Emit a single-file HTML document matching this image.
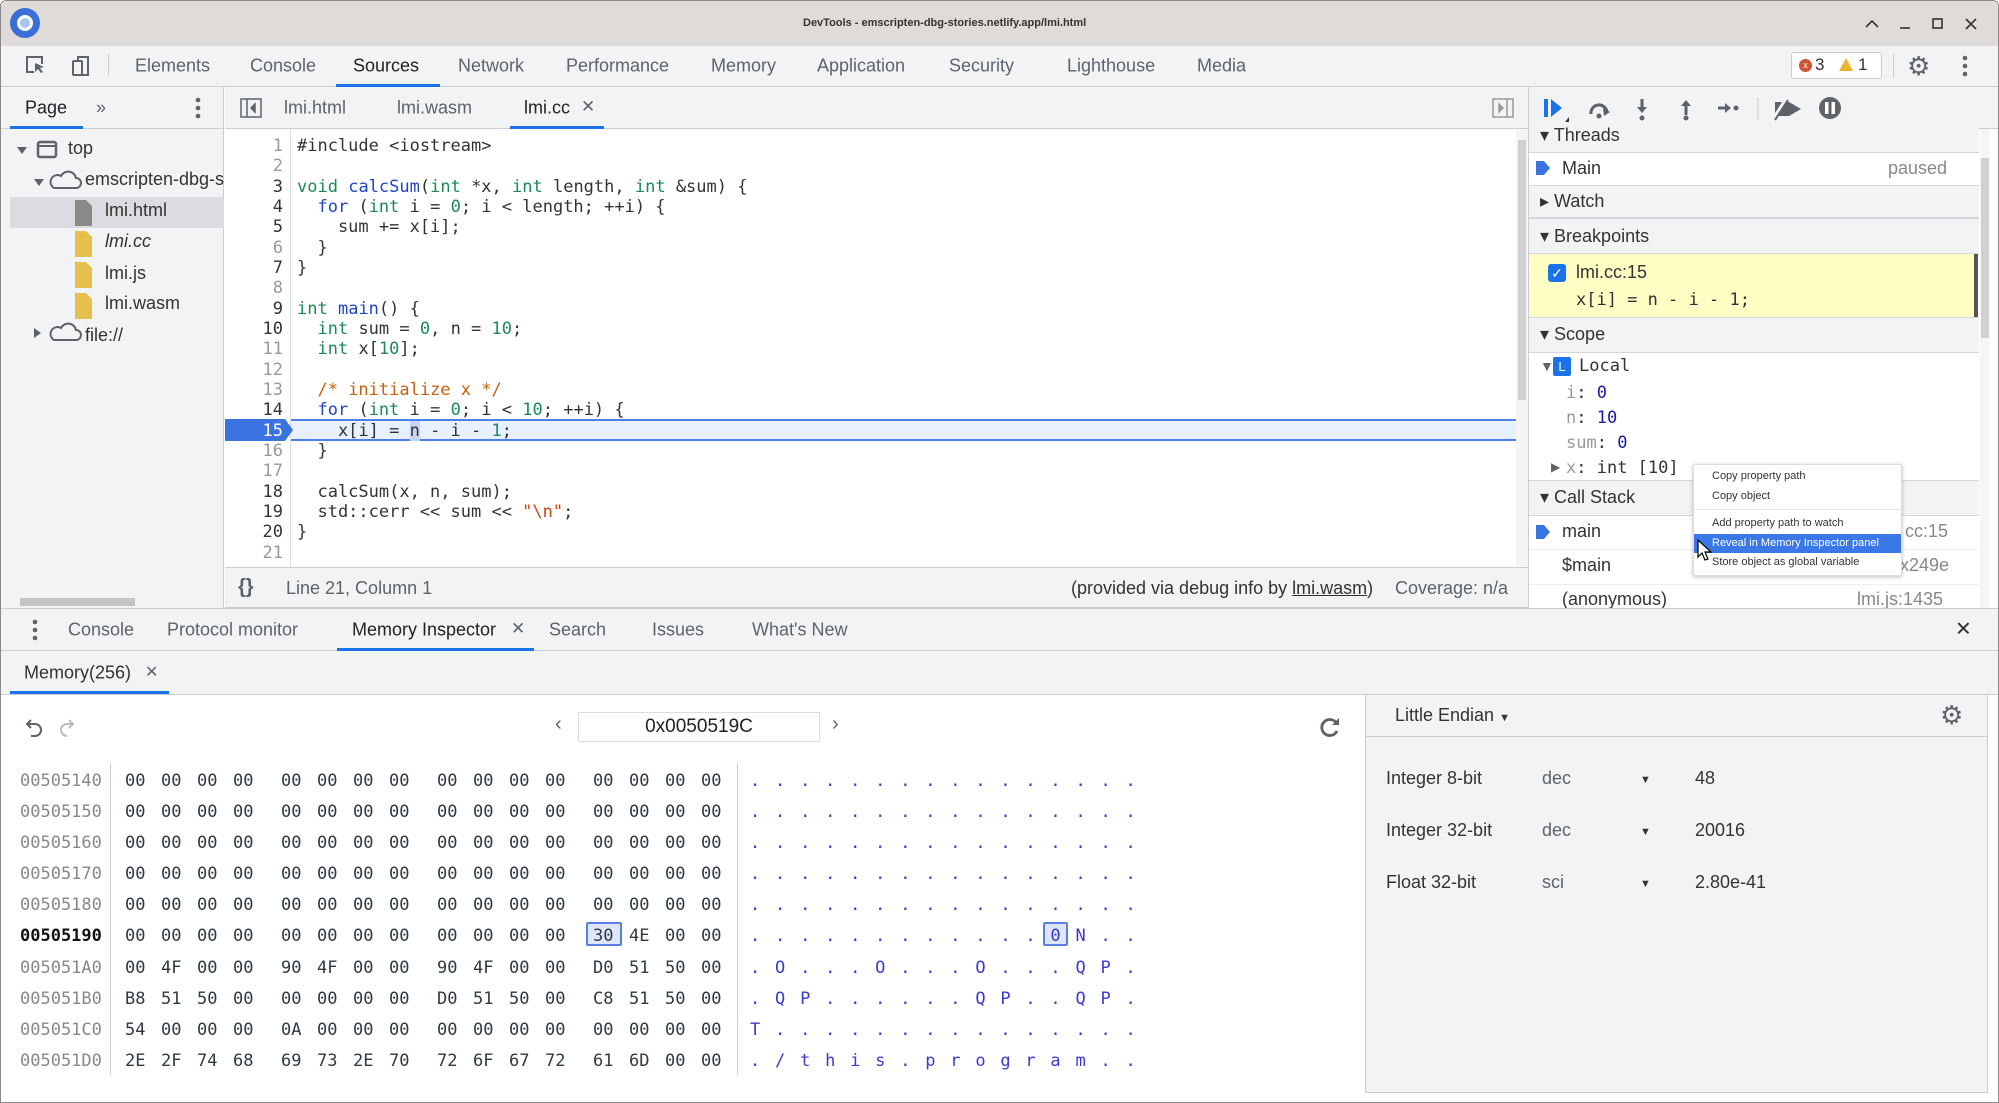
<!DOCTYPE html>
<html><head><meta charset="utf-8"><style>
*{margin:0;padding:0;box-sizing:border-box}
body{width:1999px;height:1103px;overflow:hidden;background:#fff;font-family:"Liberation Sans",sans-serif;color:#333}
.a{position:absolute;white-space:pre}
.m{font-family:"DejaVu Sans Mono","Liberation Mono",monospace}
.t{font-size:18px;color:#5f6368;transform:translateY(-50%)}
.kw{color:#1b8a5a}.bl{color:#1f45c9}.cm{color:#c8600e}.st{color:#c8460e}.nu{color:#1b8a5a}
.hx{font-size:17px;color:#303942;word-spacing:5.3px}
.ad{font-size:17px;color:#888}
.as{font-size:17px;color:#3a3ad0;letter-spacing:14.8px}
.hdr{position:absolute;left:1529px;width:450px;background:#f1f3f4;border-bottom:1px solid #d3d6da;border-top:1px solid #d3d6da}
.cmi{font-size:11px;color:#333;position:absolute;left:1712px}
</style></head><body>
<div class="a" style="left:0;top:0;width:1999px;height:1103px;border:1px solid #8a8a8a;border-radius:6px 6px 0 0"></div>
<div class="a" style="left:1px;top:1px;width:1997px;height:45px;background:#dedbd8;border-radius:6px 6px 0 0"></div>
<div class="a" style="left:10px;top:8px;width:30px;height:30px;border-radius:50%;background:#3b6fd8"></div>
<div class="a" style="left:17px;top:15px;width:16px;height:16px;border-radius:50%;background:#a8c4f2;border:3px solid #fff"></div>
<div class="a" style="left:803px;top:17px;font-size:11px;font-weight:bold;color:#333">DevTools - emscripten-dbg-stories.netlify.app/lmi.html</div>
<svg class="a" style="left:1862px;top:14px" width="130" height="20" stroke="#333" stroke-width="1.6" fill="none"><path d="M4 13l6-6 6 6"/><path d="M38 14h10"/><rect x="71" y="5" width="9" height="9"/><path d="M104 5l10 10M114 5l-10 10"/></svg>
<div class="a" style="left:1px;top:46px;width:1997px;height:41px;background:#f1f3f4;border-bottom:1px solid #cacdd1"></div>
<svg class="a" style="left:24px;top:54px" width="70" height="24" fill="none" stroke="#5f6368" stroke-width="2"><path d="M10 18H3V3h15v7"/><path d="M11 9l9 4-4 1 3 4-2 1-3-4-3 3z" fill="#5f6368" stroke="none"/><rect x="49" y="7" width="9" height="14" rx="1"/><path d="M54 7V3h10v18h-6"/></svg>
<div class="a" style="left:108px;top:54px;width:1px;height:22px;background:#ccc"></div>
<div class="a t" style="left:135px;top:66px">Elements</div>
<div class="a t" style="left:250px;top:66px">Console</div>
<div class="a t" style="left:353px;top:66px;color:#202124">Sources</div>
<div class="a" style="left:336px;top:84px;width:104px;height:3px;background:#1a73e8"></div>
<div class="a t" style="left:458px;top:66px">Network</div>
<div class="a t" style="left:566px;top:66px">Performance</div>
<div class="a t" style="left:711px;top:66px">Memory</div>
<div class="a t" style="left:817px;top:66px">Application</div>
<div class="a t" style="left:949px;top:66px">Security</div>
<div class="a t" style="left:1067px;top:66px">Lighthouse</div>
<div class="a t" style="left:1197px;top:66px">Media</div>
<div class="a" style="left:1791px;top:52px;width:91px;height:27px;border:1px solid #ccc;border-radius:3px;background:#fff"></div>
<div class="a" style="left:1799px;top:59px;width:13px;height:13px;border-radius:50%;background:#d3542c;color:#fff;font-size:9px;text-align:center;line-height:13px">x</div>
<div class="a" style="left:1815px;top:55px;font-size:17px">3</div>
<svg class="a" style="left:1838px;top:57px" width="16" height="15"><path d="M8 1L15 14H1z" fill="#e8b630"/></svg>
<div class="a" style="left:1858px;top:55px;font-size:17px">1</div>
<div class="a" style="left:1893px;top:54px;width:1px;height:24px;background:#ccc"></div>
<div class="a" style="left:1907px;top:51px;font-size:26px;color:#5f6368">⚙</div>
<svg class="a" style="left:1962px;top:55px" width="6" height="22" fill="#5f6368"><circle cx="3" cy="3" r="2.3"/><circle cx="3" cy="11" r="2.3"/><circle cx="3" cy="19" r="2.3"/></svg>
<div class="a" style="left:1px;top:87px;width:223px;height:521px;background:#f1f3f4;border-right:1px solid #cacdd1"></div>
<div class="a" style="left:1px;top:87px;width:223px;height:42px;border-bottom:1px solid #cacdd1"></div>
<div class="a t" style="left:25px;top:108px;color:#202124">Page</div>
<div class="a t" style="left:96px;top:108px">»</div>
<svg class="a" style="left:195px;top:97px" width="6" height="22" fill="#5f6368"><circle cx="3" cy="3" r="2.3"/><circle cx="3" cy="11" r="2.3"/><circle cx="3" cy="19" r="2.3"/></svg>
<div class="a" style="left:10px;top:126px;width:73px;height:3px;background:#1a73e8"></div>
<div class="a" style="left:10px;top:197px;width:214px;height:31px;background:#dadcdf"></div>
<svg class="a" style="left:14px;top:139px" width="100" height="210" fill="none" stroke="#5f6368" stroke-width="2">
<path d="M3 8h10l-5 7z" fill="#5f6368" stroke="none"/><rect x="24" y="3" width="18" height="15" rx="2" stroke-width="2.5"/><path d="M24 7h18"/>
<path d="M20 40h10l-5 7z" fill="#5f6368" stroke="none"/><path d="M40 49h22a5 5 0 0 0 0-10a8 8 0 0 0-15-2a6 6 0 0 0-7 12z"/>
<path d="M20 189l7 5-7 5z" fill="#5f6368" stroke="none"/><path d="M40 201h22a5 5 0 0 0 0-10a8 8 0 0 0-15-2a6 6 0 0 0-7 12z"/>
</svg>
<svg class="a" style="left:74px;top:199px" width="20" height="130"><path d="M1 1h11l6 6v20H1z" fill="#8a8a8a"/><path d="M1 32h11l6 6v20H1z" fill="#e6c04c"/><path d="M1 63h11l6 6v20H1z" fill="#e6c04c"/><path d="M1 94h11l6 6v20H1z" fill="#e6c04c"/></svg>
<div class="a" style="left:68px;top:138px;font-size:18px">top</div>
<div class="a" style="left:85px;top:169px;font-size:18px;width:139px;overflow:hidden">emscripten-dbg-stories</div>
<div class="a" style="left:105px;top:200px;font-size:18px">lmi.html</div>
<div class="a" style="left:105px;top:231px;font-size:18px;font-style:italic">lmi.cc</div>
<div class="a" style="left:105px;top:263px;font-size:18px">lmi.js</div>
<div class="a" style="left:105px;top:293px;font-size:18px">lmi.wasm</div>
<div class="a" style="left:85px;top:325px;font-size:18px">file://</div>
<div class="a" style="left:20px;top:598px;width:115px;height:8px;background:#c4c4c4"></div>
<div class="a" style="left:225px;top:87px;width:1303px;height:42px;background:#f1f3f4;border-bottom:1px solid #cacdd1"></div>
<svg class="a" style="left:240px;top:98px" width="22" height="20" fill="none" stroke="#5f6368" stroke-width="1.5"><rect x="1" y="1" width="20" height="18"/><path d="M7 1v18"/><path d="M15 6l-4 4 4 4z" fill="#5f6368"/></svg>
<div class="a t" style="left:284px;top:108px">lmi.html</div>
<div class="a t" style="left:397px;top:108px">lmi.wasm</div>
<div class="a t" style="left:524px;top:108px;color:#202124">lmi.cc</div>
<div class="a t" style="left:581px;top:107px;font-size:17px">✕</div>
<div class="a" style="left:510px;top:126px;width:94px;height:3px;background:#1a73e8"></div>
<svg class="a" style="left:1492px;top:98px" width="22" height="20" fill="none" stroke="#999" stroke-width="1.5"><rect x="1" y="1" width="20" height="18"/><path d="M15 1v18"/><path d="M7 6l4 4-4 4z" fill="#999"/></svg>
<div class="a" style="left:290px;top:129px;width:1px;height:438px;background:#ddd"></div>
<div class="a" style="left:1516px;top:129px;width:12px;height:438px;background:#f5f5f5"></div>
<div class="a" style="left:1518px;top:140px;width:8px;height:260px;background:#d0d0d0"></div>
<div class="a" style="left:291px;top:419px;width:1225px;height:22px;background:#e8effd;border-top:2px solid #4a80e8;border-bottom:2px solid #4a80e8"></div>
<svg class="a" style="left:225px;top:419px" width="70" height="22"><path d="M0 0h60l8 11-8 11H0z" fill="#3b73e0"/></svg>
<div class="a m" style="left:223px;top:136px;font-size:17px;line-height:20.33px;width:60px;text-align:right;color:#999">1
2
<span style="color:#333">3
4
5</span>
6
<span style="color:#333">7</span>
8
<span style="color:#333">9
10</span>
11
12
13
<span style="color:#333">14</span>
<span style="color:#fff">15</span>
16
17
<span style="color:#333">18
19
20</span>
21</div>
<div class="a m" style="left:297px;top:136px;font-size:17px;line-height:20.33px;color:#333">#include &lt;iostream&gt;

<span class="kw">void</span> <span class="bl">calcSum</span>(<span class="kw">int</span> *x, <span class="kw">int</span> length, <span class="kw">int</span> &amp;sum) {
  <span class="bl">for</span> (<span class="kw">int</span> i = <span class="nu">0</span>; i &lt; length; ++i) {
    sum += x[i];
  }
}

<span class="kw">int</span> <span class="bl">main</span>() {
  <span class="kw">int</span> sum = <span class="nu">0</span>, n = <span class="nu">10</span>;
  <span class="kw">int</span> x[<span class="nu">10</span>];

  <span class="cm">/* initialize x */</span>
  <span class="bl">for</span> (<span class="kw">int</span> i = <span class="nu">0</span>; i &lt; <span class="nu">10</span>; ++i) {
    x[i] = <span style="background:#c5d5f5">n</span> - i - <span class="nu">1</span>;
  }

  calcSum(x, n, sum);
  std::cerr &lt;&lt; sum &lt;&lt; <span class="st">"\n"</span>;
}
</div>
<div class="a" style="left:225px;top:567px;width:1303px;height:41px;background:#f1f3f4;border-top:1px solid #cacdd1;border-bottom:1px solid #cacdd1"></div>
<div class="a" style="left:238px;top:576px;font-size:20px;color:#5f6368;font-weight:bold">{}</div>
<div class="a" style="left:286px;top:578px;font-size:18px;color:#5f6368">Line 21, Column 1</div>
<div class="a" style="left:1071px;top:578px;font-size:18px;color:#333">(provided via debug info by <u>lmi.wasm</u>)</div>
<div class="a" style="left:1395px;top:578px;font-size:18px;color:#5f6368">Coverage: n/a</div>
<div class="a" style="left:1528px;top:87px;width:1px;height:521px;background:#cacdd1"></div>
<div class="a" style="left:1529px;top:87px;width:469px;height:521px;background:#fff"></div>
<div class="a" style="left:1529px;top:87px;width:469px;height:42px;background:#f1f3f4;border-bottom:1px solid #cacdd1"></div>
<svg class="a" style="left:1540px;top:96px" width="310" height="28">
<rect x="4" y="3" width="4" height="18" fill="#1a73e8"/><path d="M11 3l11 9-11 9z" fill="#1a73e8"/><path d="M25 26l4-5v5z" fill="#333"/>
<path d="M51 18a8 8 0 0 1 16-2" fill="none" stroke="#5f6368" stroke-width="3"/><path d="M63 12l7 4-6 4z" fill="#5f6368"/><circle cx="59" cy="20" r="2.5" fill="#5f6368"/>
<path d="M102 3v10" stroke="#5f6368" stroke-width="3"/><path d="M97 11l5 6 5-6z" fill="#5f6368"/><circle cx="102" cy="22" r="2.5" fill="#5f6368"/>
<path d="M146 9v10" stroke="#5f6368" stroke-width="3"/><path d="M141 10l5-6 5 6z" fill="#5f6368"/><circle cx="146" cy="22" r="2.5" fill="#5f6368"/>
<path d="M178 12h8" stroke="#5f6368" stroke-width="3"/><path d="M185 7l6 5-6 5z" fill="#5f6368"/><circle cx="196" cy="12" r="2.5" fill="#5f6368"/>
<path d="M218 2v22" stroke="#ccc" stroke-width="1"/>
<path d="M235 6h14l12 7-12 7h-14z" fill="#5f6368"/><path d="M233 24l14-22" stroke="#f1f3f4" stroke-width="4"/><path d="M235 24l13-20" stroke="#5f6368" stroke-width="2"/>
<circle cx="290" cy="12" r="11" fill="#5f6368"/><rect x="285" y="6" width="3.5" height="12" fill="#fff"/><rect x="291.5" y="6" width="3.5" height="12" fill="#fff"/>
</svg>
<div class="hdr" style="top:122px;height:31px;border-top:none"></div>
<div class="a" style="left:1540px;top:125px;font-size:18px;color:#333;height:20px;overflow:hidden">▾ Threads</div>
<svg class="a" style="left:1535px;top:159px" width="16" height="18"><path d="M1 2h8l6 7-6 7H1z" fill="#3b73e0"/></svg>
<div class="a" style="left:1562px;top:158px;font-size:18px">Main</div>
<div class="a" style="left:1888px;top:158px;font-size:18px;color:#888">paused</div>
<div class="hdr" style="top:185px;height:33px"></div>
<div class="a" style="left:1540px;top:191px;font-size:18px">▸ Watch</div>
<div class="hdr" style="top:218px;height:36px"></div>
<div class="a" style="left:1540px;top:226px;font-size:18px">▾ Breakpoints</div>
<div class="a" style="left:1529px;top:254px;width:449px;height:63px;background:#fefdc4;border-right:4px solid #555"></div>
<div class="a" style="left:1548px;top:264px;width:18px;height:18px;border-radius:3px;background:#1a73e8;color:#fff;font-size:14px;text-align:center;line-height:18px">✓</div>
<div class="a" style="left:1576px;top:262px;font-size:18px">lmi.cc:15</div>
<div class="a m" style="left:1576px;top:290px;font-size:17px">x[i] = n - i - 1;</div>
<div class="hdr" style="top:317px;height:36px"></div>
<div class="a" style="left:1540px;top:324px;font-size:18px">▾ Scope</div>
<div class="a" style="left:1540px;top:358px;font-size:14px;color:#5f6368">▼</div>
<div class="a" style="left:1553px;top:357px;width:18px;height:19px;background:#1a73e8;color:#fff;font-size:13px;text-align:center;line-height:19px;border-radius:2px">L</div>
<div class="a m" style="left:1579px;top:356px;font-size:17px">Local</div>
<div class="a m" style="left:1566px;top:381px;font-size:17px;line-height:25px"><span style="color:#999">i</span>: <span style="color:#1a1aa6">0</span>
<span style="color:#999">n</span>: <span style="color:#1a1aa6">10</span>
<span style="color:#999">sum</span>: <span style="color:#1a1aa6">0</span>
<span style="color:#999">x</span>: int [10]</div>
<div class="a" style="left:1551px;top:460px;font-size:12px;color:#5f6368">▶</div>
<div class="hdr" style="top:480px;height:36px"></div>
<div class="a" style="left:1540px;top:487px;font-size:18px">▾ Call Stack</div>
<svg class="a" style="left:1535px;top:523px" width="16" height="18"><path d="M1 2h8l6 7-6 7H1z" fill="#3b73e0"/></svg>
<div class="a" style="left:1562px;top:521px;font-size:18px">main</div>
<div class="a" style="left:1905px;top:521px;font-size:18px;color:#888">cc:15</div>
<div class="a" style="left:1529px;top:549px;width:450px;height:1px;background:#eee"></div>
<div class="a" style="left:1562px;top:555px;font-size:18px">$main</div>
<div class="a" style="left:1900px;top:555px;font-size:18px;color:#888">x249e</div>
<div class="a" style="left:1529px;top:584px;width:450px;height:1px;background:#eee"></div>
<div class="a" style="left:1562px;top:589px;font-size:18px">(anonymous)</div>
<div class="a" style="left:1857px;top:589px;font-size:18px;color:#888">lmi.js:1435</div>
<div class="a" style="left:1980px;top:129px;width:10px;height:479px;background:#f5f5f5"></div>
<div class="a" style="left:1981px;top:158px;width:8px;height:180px;background:#d0d0d0"></div>
<div class="a" style="left:1693px;top:464px;width:209px;height:112px;background:#fff;border:1px solid #ddd;box-shadow:0 1px 4px rgba(0,0,0,.25)"></div>
<div class="cmi" style="top:470px">Copy property path</div>
<div class="cmi" style="top:490px">Copy object</div>
<div class="a" style="left:1694px;top:509px;width:207px;height:1px;background:#e4e4e4"></div>
<div class="cmi" style="top:517px">Add property path to watch</div>
<div class="a" style="left:1694px;top:534px;width:207px;height:19px;background:#3b78e7"></div>
<div class="cmi" style="top:537px;color:#fff">Reveal in Memory Inspector panel</div>
<div class="cmi" style="top:556px">Store object as global variable</div>
<svg class="a" style="left:1697px;top:539px" width="16" height="22"><path d="M1 1v17l4-4 3 7 3-1-3-7h6z" fill="#fff" stroke="#000" stroke-width="1.2"/></svg>
<div class="a" style="left:1px;top:608px;width:1997px;height:43px;background:#f1f3f4;border-top:1px solid #cacdd1;border-bottom:1px solid #cacdd1"></div>
<svg class="a" style="left:32px;top:619px" width="6" height="22" fill="#5f6368"><circle cx="3" cy="3" r="2.3"/><circle cx="3" cy="11" r="2.3"/><circle cx="3" cy="19" r="2.3"/></svg>
<div class="a t" style="left:68px;top:630px">Console</div>
<div class="a t" style="left:167px;top:630px">Protocol monitor</div>
<div class="a t" style="left:352px;top:630px;color:#202124">Memory Inspector</div>
<div class="a t" style="left:511px;top:629px;font-size:17px">✕</div>
<div class="a" style="left:337px;top:648px;width:197px;height:3px;background:#1a73e8"></div>
<div class="a t" style="left:549px;top:630px">Search</div>
<div class="a t" style="left:652px;top:630px">Issues</div>
<div class="a t" style="left:752px;top:630px">What's New</div>
<div class="a t" style="left:1955px;top:629px;font-size:20px;color:#333">✕</div>
<div class="a" style="left:1px;top:651px;width:1997px;height:44px;background:#f1f3f4;border-bottom:1px solid #cacdd1"></div>
<div class="a t" style="left:24px;top:673px;color:#333">Memory(256)</div>
<div class="a t" style="left:145px;top:672px;font-size:16px">✕</div>
<div class="a" style="left:10px;top:691px;width:159px;height:3px;background:#1a73e8"></div>
<div class="a" style="left:1px;top:695px;width:1364px;height:400px;background:#fff"></div>
<svg class="a" style="left:25px;top:715px" width="50" height="24" fill="none" stroke-width="2"><path d="M6 5L2 9l4 4" stroke="#5f6368"/><path d="M2 9h8a6 6 0 0 1 0 12H6" stroke="#5f6368"/><path d="M44 5l4 4-4 4" stroke="#bbb"/><path d="M48 9h-6a6 6 0 0 0 0 12" stroke="#bbb"/></svg>
<div class="a" style="left:555px;top:713px;font-size:20px;color:#5f6368">‹</div>
<div class="a" style="left:578px;top:712px;width:242px;height:30px;border:1px solid #ddd;text-align:center;font-size:19px;line-height:28px;color:#202124">0x0050519C</div>
<div class="a" style="left:832px;top:713px;font-size:20px;color:#5f6368">›</div>
<svg class="a" style="left:1318px;top:715px" width="24" height="24" fill="none" stroke="#5f6368" stroke-width="2.8"><path d="M19 9a8 8 0 1 0 0 7"/><path d="M21 3v7h-7z" fill="#5f6368" stroke="none"/></svg>
<div class="a" style="left:110px;top:763px;width:1px;height:312px;background:#ccc"></div>
<div class="a" style="left:737px;top:763px;width:1px;height:312px;background:#ccc"></div>
<div class="a m ad" style="left:20px;top:766px;line-height:31.1px">00505140
00505150
00505160
00505170
00505180
<b style="color:#111">00505190</b>
005051A0
005051B0
005051C0
005051D0</div>
<div class="a" style="left:586px;top:922px;width:36px;height:24px;border:2px solid #5a7fe0;background:#dfe6fb;border-radius:2px"></div>
<div class="a" style="left:1043px;top:922px;width:25px;height:24px;border:2px solid #5a7fe0;background:#dfe6fb;border-radius:2px"></div>
<div class="a m hx" style="left:125px;top:766px;line-height:31.1px">00 00 00 00
00 00 00 00
00 00 00 00
00 00 00 00
00 00 00 00
00 00 00 00
00 4F 00 00
B8 51 50 00
54 00 00 00
2E 2F 74 68</div>
<div class="a m hx" style="left:281px;top:766px;line-height:31.1px">00 00 00 00
00 00 00 00
00 00 00 00
00 00 00 00
00 00 00 00
00 00 00 00
90 4F 00 00
00 00 00 00
0A 00 00 00
69 73 2E 70</div>
<div class="a m hx" style="left:437px;top:766px;line-height:31.1px">00 00 00 00
00 00 00 00
00 00 00 00
00 00 00 00
00 00 00 00
00 00 00 00
90 4F 00 00
D0 51 50 00
00 00 00 00
72 6F 67 72</div>
<div class="a m hx" style="left:593px;top:766px;line-height:31.1px">00 00 00 00
00 00 00 00
00 00 00 00
00 00 00 00
00 00 00 00
30 4E 00 00
D0 51 50 00
C8 51 50 00
00 00 00 00
61 6D 00 00</div>
<div class="a m as" style="left:750px;top:766px;line-height:31.1px">................
................
................
................
................
............0N..
.O...O...O...QP.
.QP......QP..QP.
T...............
./this.program..</div>
<div class="a" style="left:1365px;top:695px;width:623px;height:398px;background:#f1f3f4;border-left:1px solid #cacdd1;border-right:1px solid #cacdd1;border-bottom:1px solid #cacdd1"></div>
<div class="a" style="left:1366px;top:736px;width:621px;height:1px;background:#cacdd1"></div>
<div class="a" style="left:1395px;top:705px;font-size:18px;color:#333">Little Endian <span style="font-size:11px">▼</span></div>
<div class="a" style="left:1940px;top:700px;font-size:26px;color:#5f6368">⚙</div>
<div class="a" style="left:1386px;top:752px;font-size:18px;line-height:52px;color:#333">Integer 8-bit
Integer 32-bit
Float 32-bit</div>
<div class="a" style="left:1542px;top:752px;font-size:18px;line-height:52px;color:#5f6368">dec
dec
sci</div>
<div class="a" style="left:1640px;top:754px;font-size:11px;line-height:52px;color:#333">▼
▼
▼</div>
<div class="a" style="left:1695px;top:752px;font-size:18px;line-height:52px;color:#333">48
20016
2.80e-41</div>
</body></html>
